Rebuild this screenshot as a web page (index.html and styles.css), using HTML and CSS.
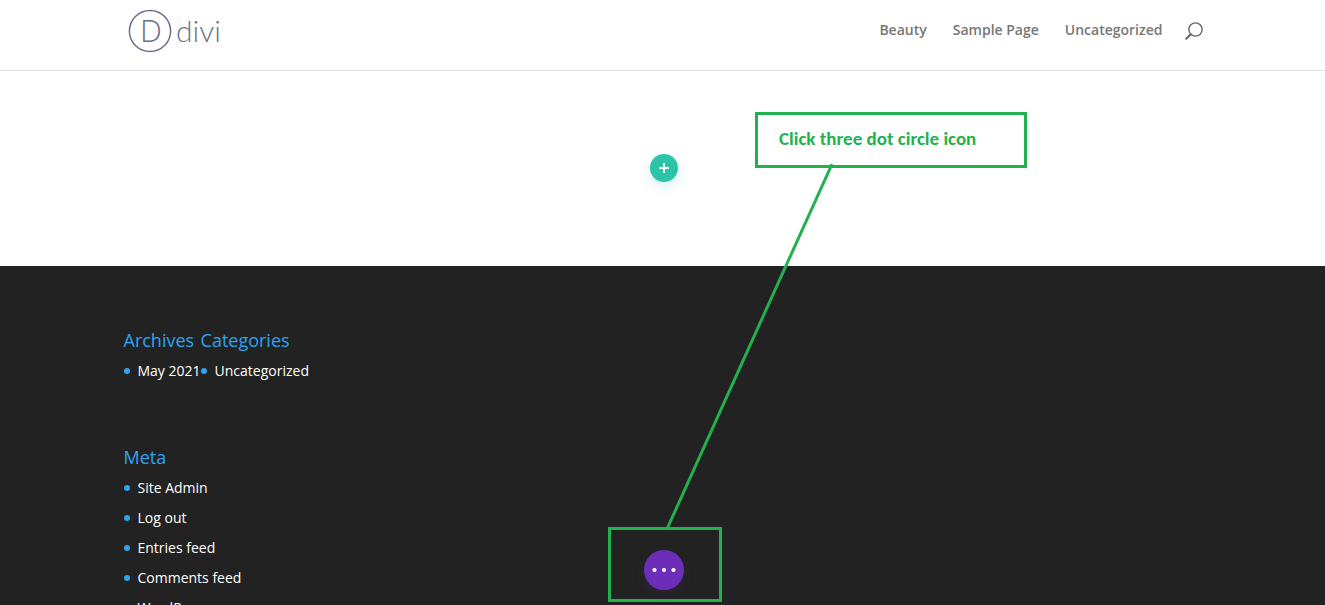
FILE: index.html
```html
<!DOCTYPE html>
<html lang="en">
<head>
<meta charset="utf-8">
<meta name="viewport" content="width=device-width, initial-scale=1">
<title>Divi</title>
<link rel="stylesheet" href="styles.css">
</head>
<body>
<header class="site-header">
  <div class="container header-row">
    <a class="logo" href="#" aria-label="Divi home">
      <svg width="100" height="48" viewBox="0 0 100 48">
        <circle cx="26" cy="24" r="20.6" fill="none" stroke="#6d6f87" stroke-width="1.5"/>
        <text class="logo-mark" x="16" y="35">D</text>
        <text class="logo-word" x="52" y="35">divi</text>
      </svg>
    </a>
    <nav class="main-nav">
      <a href="#">Beauty</a>
      <a href="#">Sample Page</a>
      <a href="#">Uncategorized</a>
      <button class="search-button" type="button" aria-label="Search">
        <svg width="18" height="18" viewBox="0 0 18 18" fill="none" stroke="#666" stroke-linecap="round">
          <circle cx="10.5" cy="7.5" r="6.6" stroke-width="1.4"/>
          <path d="M5.8 12.2 1.2 16.8" stroke-width="2"/>
        </svg>
      </button>
    </nav>
  </div>
</header>
<main class="builder">
  <button class="add-button" type="button" aria-label="Add section">
    <svg width="28" height="28" viewBox="0 0 28 28" stroke="#fff" stroke-width="2"><path d="M14 9v10M9 14h10"/></svg>
  </button>
</main>
<footer class="site-footer">
  <div class="container widgets">
    <div class="widget-row">
      <section><h4>Archives</h4><ul><li><a href="#">May 2021</a></li></ul></section>
      <section><h4>Categories</h4><ul><li><a href="#">Uncategorized</a></li></ul></section>
    </div>
    <section>
      <h4>Meta</h4>
      <ul>
        <li><a href="#">Site Admin</a></li>
        <li><a href="#">Log out</a></li>
        <li><a href="#">Entries feed</a></li>
        <li><a href="#">Comments feed</a></li>
        <li><a href="#">WordPress</a></li>
      </ul>
    </section>
  </div>
</footer>
<button class="menu-button" type="button" aria-label="Builder menu">
  <svg width="40" height="40" viewBox="0 0 40 40" fill="#fff"><circle cx="10.5" cy="20" r="2.1"/><circle cx="20" cy="20" r="2.1"/><circle cx="29.5" cy="20" r="2.1"/></svg>
</button>
<div class="callout">Click three dot circle icon</div>
<div class="target-frame"></div>
<svg class="pointer" width="168" height="368" viewBox="0 0 168 368"><path d="M167 1 2 366" stroke="#22b14c" stroke-width="3"/></svg>
</body>
</html>
```
FILE: styles.css
```css
* { box-sizing: border-box; }
body {
  position: relative;
  height: 100vh;
  margin: 0;
  overflow: hidden;
  background: #fff;
  font-family: "Open Sans", "Noto Sans", sans-serif;
  font-size: 14px;
}
a { color: inherit; text-decoration: none; }
button { padding: 0; border: 0; background: none; cursor: pointer; }
svg { display: block; }
.container { max-width: 1080px; margin: 0 auto; padding-left: 1px; }
.site-header { border-bottom: 1px solid #e2e2e2; }
.header-row { display: flex; justify-content: space-between; align-items: flex-start; height: 70px; }
.logo { padding-top: 7px; }
.logo-mark, .logo-word { fill: #6d6f87; font-weight: 300; }
.logo-mark { font-family: "Open Sans", sans-serif; font-size: 31px; }
.logo-word { font-family: Lato, sans-serif; font-size: 30px; }
.main-nav {
  display: flex;
  align-items: center;
  gap: 26px;
  padding-top: 19px;
  color: #777;
  font-weight: 600;
  line-height: 20px;
}
.search-button { margin-left: -4px; padding-top: 3px; }
.builder { display: flex; justify-content: center; padding: 83px 0 84px 2px; }
.add-button { width: 28px; height: 28px; border-radius: 50%; background: #2bc4a9; box-shadow: 0 4px 12px #2bc4a933; }
.site-footer { padding-top: 61px; background: #222; }
.widgets { display: flex; flex-direction: column; gap: 55px; }
.widget-row { display: flex; }
.widget-row ul { white-space: nowrap; }
.site-footer h4 { margin: 0 0 6px; color: #2ea3f2; font-size: 18px; font-weight: 400; line-height: 26px; }
.site-footer ul { margin: 0; padding: 0; list-style: none; }
.site-footer li { display: flex; align-items: center; gap: 8px; margin-bottom: 6px; color: #fff; line-height: 24px; }
.site-footer li::before { content: ""; width: 6px; height: 6px; border-radius: 50%; background: #2ea3f2; }
.menu-button {
  position: absolute;
  bottom: 15px;
  left: calc(50% - 19px);
  border-radius: 50%;
  background: #6c2eb9;
  box-shadow: 0 4px 12px #6c2eb922;
}
.callout {
  position: absolute;
  top: 112px;
  left: 755px;
  width: 272px;
  height: 56px;
  padding: 13px 21px;
  border: 3px solid #22b14c;
  color: #22b14c;
  font: bold 19px/22px Carlito, Calibri, Lato, sans-serif;
  white-space: nowrap;
}
.target-frame { position: absolute; top: 527px; left: 608px; width: 114px; height: 75px; border: 3px solid #22b14c; pointer-events: none; }
.pointer { position: absolute; top: 163px; left: 665px; pointer-events: none; }
```
